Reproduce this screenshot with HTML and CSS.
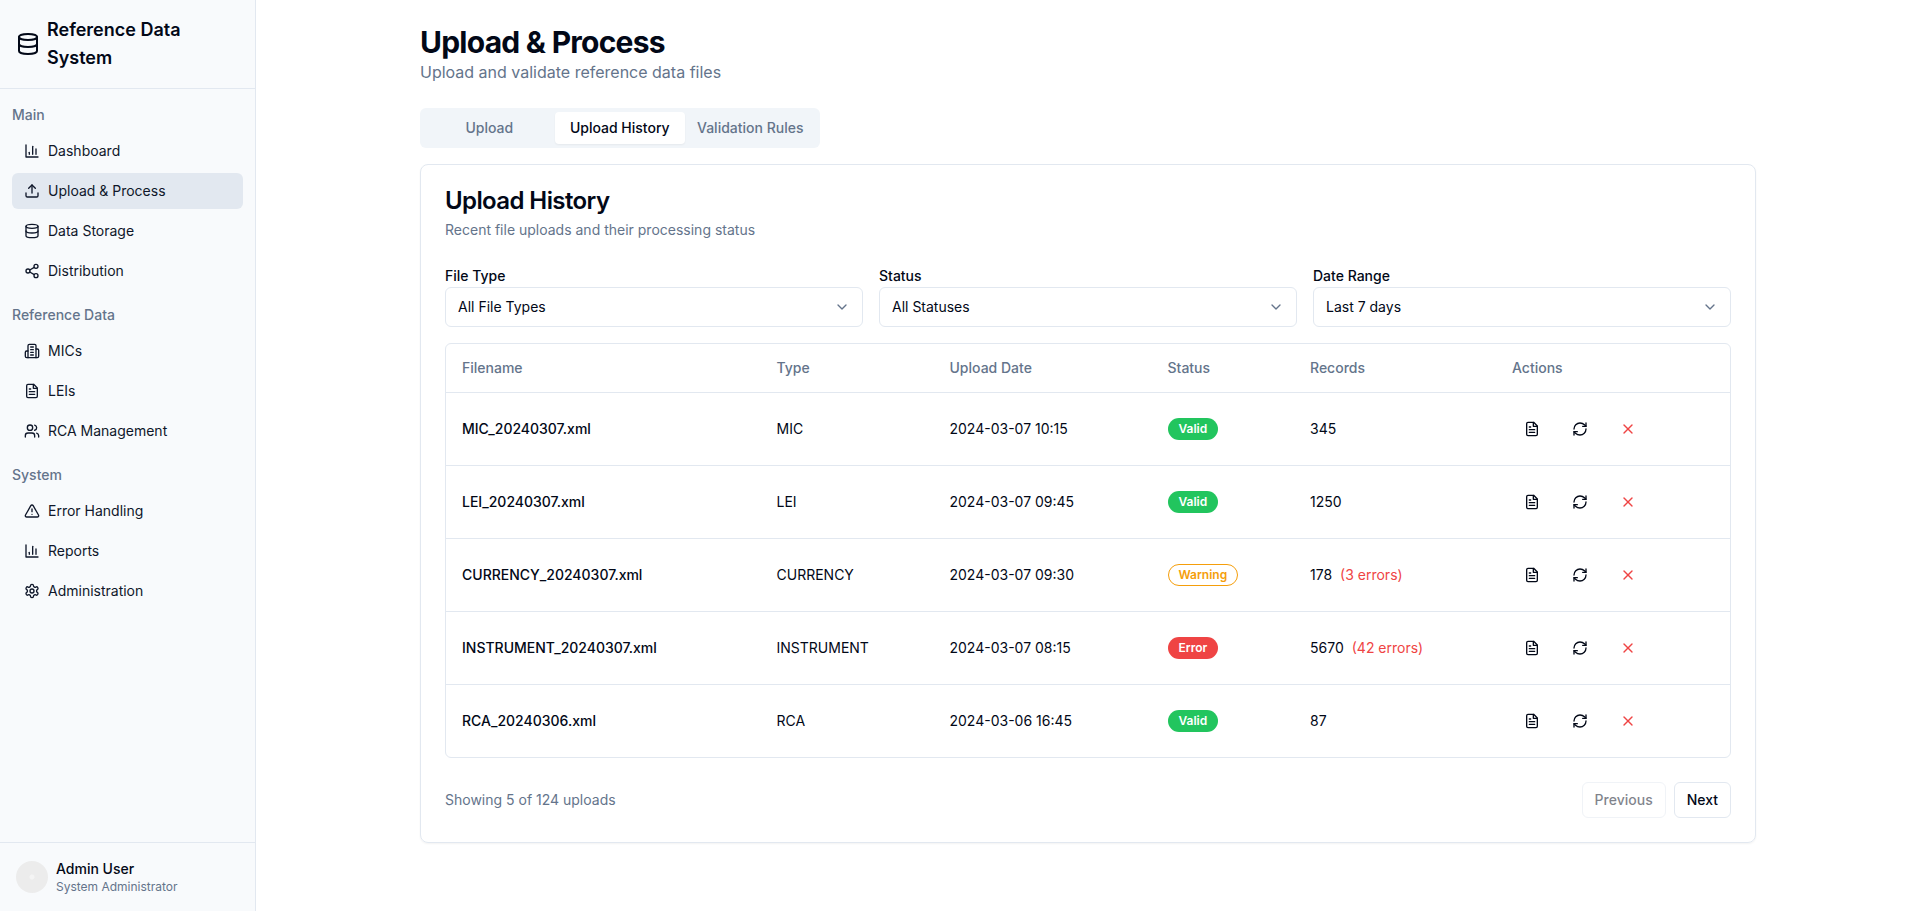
FILE: index.html
```html
<!DOCTYPE html>
<html lang="en">
<head>
  <meta charset="UTF-8" />
  <meta name="viewport" content="width=device-width, initial-scale=1.0" />
  <title>Upload &amp; Process</title>
  <link rel="stylesheet" href="styles.css">
</head>
<body>
  <svg class="icon-defs" xmlns="http://www.w3.org/2000/svg">
    <symbol id="i-chart" viewBox="0 0 24 24"><path d="M3 3v18h18"/><path d="M18 17V9"/><path d="M13 17V5"/><path d="M8 17v-3"/></symbol>
    <symbol id="i-upload" viewBox="0 0 24 24"><path d="M21 15v4a2 2 0 0 1-2 2H5a2 2 0 0 1-2-2v-4"/><polyline points="17 8 12 3 7 8"/><line x1="12" y1="3" x2="12" y2="15"/></symbol>
    <symbol id="i-database" viewBox="0 0 24 24"><ellipse cx="12" cy="5" rx="9" ry="3"/><path d="M3 5V19A9 3 0 0 0 21 19V5"/><path d="M3 12A9 3 0 0 0 21 12"/></symbol>
    <symbol id="i-share" viewBox="0 0 24 24"><circle cx="18" cy="5" r="3"/><circle cx="6" cy="12" r="3"/><circle cx="18" cy="19" r="3"/><line x1="8.59" y1="13.51" x2="15.42" y2="17.49"/><line x1="15.41" y1="6.51" x2="8.59" y2="10.49"/></symbol>
    <symbol id="i-building" viewBox="0 0 24 24"><path d="M6 22V4a2 2 0 0 1 2-2h8a2 2 0 0 1 2 2v18Z"/><path d="M6 12H4a2 2 0 0 0-2 2v6a2 2 0 0 0 2 2h2"/><path d="M18 9h2a2 2 0 0 1 2 2v9a2 2 0 0 1-2 2h-2"/><path d="M10 6h4"/><path d="M10 10h4"/><path d="M10 14h4"/><path d="M10 18h4"/></symbol>
    <symbol id="i-file" viewBox="0 0 24 24"><path d="M14.5 2H6a2 2 0 0 0-2 2v16a2 2 0 0 0 2 2h12a2 2 0 0 0 2-2V7.5L14.5 2z"/><polyline points="14 2 14 8 20 8"/><line x1="16" y1="13" x2="8" y2="13"/><line x1="16" y1="17" x2="8" y2="17"/><line x1="10" y1="9" x2="8" y2="9"/></symbol>
    <symbol id="i-users" viewBox="0 0 24 24"><path d="M16 21v-2a4 4 0 0 0-4-4H6a4 4 0 0 0-4 4v2"/><circle cx="9" cy="7" r="4"/><path d="M22 21v-2a4 4 0 0 0-3-3.87"/><path d="M16 3.13a4 4 0 0 1 0 7.75"/></symbol>
    <symbol id="i-alert" viewBox="0 0 24 24"><path d="m21.73 18-8-14a2 2 0 0 0-3.48 0l-8 14A2 2 0 0 0 4 21h16a2 2 0 0 0 1.73-3Z"/><path d="M12 9v4"/><path d="M12 17h.01"/></symbol>
    <symbol id="i-gear" viewBox="0 0 24 24"><path d="M12.22 2h-.44a2 2 0 0 0-2 2v.18a2 2 0 0 1-1 1.73l-.43.25a2 2 0 0 1-2 0l-.15-.08a2 2 0 0 0-2.73.73l-.22.38a2 2 0 0 0 .73 2.73l.15.1a2 2 0 0 1 1 1.72v.51a2 2 0 0 1-1 1.74l-.15.09a2 2 0 0 0-.73 2.73l.22.38a2 2 0 0 0 2.73.73l.15-.08a2 2 0 0 1 2 0l.43.25a2 2 0 0 1 1 1.73V20a2 2 0 0 0 2 2h.44a2 2 0 0 0 2-2v-.18a2 2 0 0 1 1-1.73l.43-.25a2 2 0 0 1 2 0l.15.08a2 2 0 0 0 2.73-.73l.22-.39a2 2 0 0 0-.73-2.73l-.15-.08a2 2 0 0 1-1-1.74v-.5a2 2 0 0 1 1-1.74l.15-.09a2 2 0 0 0 .73-2.73l-.22-.38a2 2 0 0 0-2.73-.73l-.15.08a2 2 0 0 1-2 0l-.43-.25a2 2 0 0 1-1-1.73V4a2 2 0 0 0-2-2z"/><circle cx="12" cy="12" r="3"/></symbol>
    <symbol id="i-refresh" viewBox="0 0 24 24"><path d="M3 12a9 9 0 0 1 9-9 9.75 9.75 0 0 1 6.74 2.74L21 8"/><path d="M21 3v5h-5"/><path d="M21 12a9 9 0 0 1-9 9 9.75 9.75 0 0 1-6.74-2.74L3 16"/><path d="M8 16H3v5"/></symbol>
    <symbol id="i-x" viewBox="0 0 24 24"><path d="M18 6 6 18"/><path d="m6 6 12 12"/></symbol>
    <symbol id="i-chevron" viewBox="0 0 24 24"><path d="m6 9 6 6 6-6"/></symbol>
  </svg>

  <div class="layout">
    <aside class="sidebar">
      <div class="brand">
        <svg class="brand-icon"><use href="#i-database"/></svg>
        <span>Reference Data System</span>
      </div>

      <nav class="nav">
        <div class="nav-group">
          <div class="nav-label">Main</div>
          <a class="nav-item"><svg class="icon"><use href="#i-chart"/></svg>Dashboard</a>
          <a class="nav-item active"><svg class="icon"><use href="#i-upload"/></svg>Upload &amp; Process</a>
          <a class="nav-item"><svg class="icon"><use href="#i-database"/></svg>Data Storage</a>
          <a class="nav-item"><svg class="icon"><use href="#i-share"/></svg>Distribution</a>
        </div>
        <div class="nav-group">
          <div class="nav-label">Reference Data</div>
          <a class="nav-item"><svg class="icon"><use href="#i-building"/></svg>MICs</a>
          <a class="nav-item"><svg class="icon"><use href="#i-file"/></svg>LEIs</a>
          <a class="nav-item"><svg class="icon"><use href="#i-users"/></svg>RCA Management</a>
        </div>
        <div class="nav-group">
          <div class="nav-label">System</div>
          <a class="nav-item"><svg class="icon"><use href="#i-alert"/></svg>Error Handling</a>
          <a class="nav-item"><svg class="icon"><use href="#i-chart"/></svg>Reports</a>
          <a class="nav-item"><svg class="icon"><use href="#i-gear"/></svg>Administration</a>
        </div>
      </nav>

      <div class="user">
        <div class="avatar"></div>
        <div>
          <div class="user-name">Admin User</div>
          <div class="user-role">System Administrator</div>
        </div>
      </div>
    </aside>

    <main class="main">
      <h1>Upload &amp; Process</h1>
      <p class="subtitle">Upload and validate reference data files</p>

      <div class="tabs">
        <button class="tab">Upload</button>
        <button class="tab active">Upload History</button>
        <button class="tab">Validation Rules</button>
      </div>

      <section class="card">
        <h2>Upload History</h2>
        <p class="card-desc">Recent file uploads and their processing status</p>

        <div class="filters">
          <div class="filter">
            <label>File Type</label>
            <div class="select">All File Types<svg class="icon chevron"><use href="#i-chevron"/></svg></div>
          </div>
          <div class="filter">
            <label>Status</label>
            <div class="select">All Statuses<svg class="icon chevron"><use href="#i-chevron"/></svg></div>
          </div>
          <div class="filter">
            <label>Date Range</label>
            <div class="select">Last 7 days<svg class="icon chevron"><use href="#i-chevron"/></svg></div>
          </div>
        </div>

        <div class="table-wrap">
          <table>
            <colgroup>
              <col class="col-name"><col class="col-type"><col class="col-date"><col class="col-status"><col class="col-records"><col>
            </colgroup>
            <thead>
              <tr><th>Filename</th><th>Type</th><th>Upload Date</th><th>Status</th><th>Records</th><th>Actions</th></tr>
            </thead>
            <tbody>
              <tr>
                <td class="filename">MIC_20240307.xml</td><td>MIC</td><td>2024-03-07 10:15</td>
                <td><span class="badge valid">Valid</span></td>
                <td>345</td>
                <td><div class="actions">
                  <button class="icon-btn"><svg class="icon"><use href="#i-file"/></svg></button>
                  <button class="icon-btn"><svg class="icon"><use href="#i-refresh"/></svg></button>
                  <button class="icon-btn danger"><svg class="icon"><use href="#i-x"/></svg></button>
                </div></td>
              </tr>
              <tr>
                <td class="filename">LEI_20240307.xml</td><td>LEI</td><td>2024-03-07 09:45</td>
                <td><span class="badge valid">Valid</span></td>
                <td>1250</td>
                <td><div class="actions">
                  <button class="icon-btn"><svg class="icon"><use href="#i-file"/></svg></button>
                  <button class="icon-btn"><svg class="icon"><use href="#i-refresh"/></svg></button>
                  <button class="icon-btn danger"><svg class="icon"><use href="#i-x"/></svg></button>
                </div></td>
              </tr>
              <tr>
                <td class="filename">CURRENCY_20240307.xml</td><td>CURRENCY</td><td>2024-03-07 09:30</td>
                <td><span class="badge warning">Warning</span></td>
                <td>178<span class="errors">(3 errors)</span></td>
                <td><div class="actions">
                  <button class="icon-btn"><svg class="icon"><use href="#i-file"/></svg></button>
                  <button class="icon-btn"><svg class="icon"><use href="#i-refresh"/></svg></button>
                  <button class="icon-btn danger"><svg class="icon"><use href="#i-x"/></svg></button>
                </div></td>
              </tr>
              <tr>
                <td class="filename">INSTRUMENT_20240307.xml</td><td>INSTRUMENT</td><td>2024-03-07 08:15</td>
                <td><span class="badge error">Error</span></td>
                <td>5670<span class="errors">(42 errors)</span></td>
                <td><div class="actions">
                  <button class="icon-btn"><svg class="icon"><use href="#i-file"/></svg></button>
                  <button class="icon-btn"><svg class="icon"><use href="#i-refresh"/></svg></button>
                  <button class="icon-btn danger"><svg class="icon"><use href="#i-x"/></svg></button>
                </div></td>
              </tr>
              <tr>
                <td class="filename">RCA_20240306.xml</td><td>RCA</td><td>2024-03-06 16:45</td>
                <td><span class="badge valid">Valid</span></td>
                <td>87</td>
                <td><div class="actions">
                  <button class="icon-btn"><svg class="icon"><use href="#i-file"/></svg></button>
                  <button class="icon-btn"><svg class="icon"><use href="#i-refresh"/></svg></button>
                  <button class="icon-btn danger"><svg class="icon"><use href="#i-x"/></svg></button>
                </div></td>
              </tr>
            </tbody>
          </table>
        </div>

        <div class="pager">
          <span class="pager-info">Showing 5 of 124 uploads</span>
          <div class="pager-buttons">
            <button class="page-btn disabled">Previous</button>
            <button class="page-btn">Next</button>
          </div>
        </div>
      </section>
    </main>
  </div>
</body>
</html>
```

FILE: styles.css
```css
* {
  box-sizing: border-box;
}
body {
  margin: 0;
  font-family: Inter, "Liberation Sans", sans-serif;
  font-size: 14px;
  line-height: 20px;
  color: #020817;
  background: #fff;
}
button {
  font: inherit;
  color: inherit;
  background: none;
  border: 0;
  padding: 0;
}
.icon-defs {
  display: none;
}
.icon,
.brand-icon {
  width: 16px;
  height: 16px;
  flex: none;
  fill: none;
  stroke: currentColor;
  stroke-width: 2;
  stroke-linecap: round;
  stroke-linejoin: round;
}
.brand-icon {
  width: 24px;
  height: 24px;
}

.layout {
  display: flex;
  height: 911px;
}

/* sidebar */
.sidebar {
  width: 256px;
  flex: none;
  display: flex;
  flex-direction: column;
  background: #f8fafc;
  border-right: 1px solid #e2e8f0;
}
.brand {
  display: flex;
  align-items: center;
  gap: 7px;
  height: 89px;
  padding: 16px;
  border-bottom: 1px solid #e2e8f0;
  font-size: 18px;
  line-height: 28px;
  font-weight: 600;
}
.nav {
  flex: 1;
  padding: 10px 12px 0;
}
.nav-group {
  display: flex;
  flex-direction: column;
  gap: 4px;
  margin-bottom: 10px;
}
.nav-label {
  height: 32px;
  line-height: 32px;
  margin-bottom: -2px;
  font-weight: 500;
  color: #64748b;
}
.nav-item {
  display: flex;
  align-items: center;
  gap: 8px;
  height: 36px;
  padding: 0 12px;
  border-radius: 6px;
  color: #0f172a;
}
.nav-item.active {
  background: #e2e8f0;
}
.user {
  display: flex;
  align-items: center;
  gap: 8px;
  height: 69px;
  padding: 16px;
  border-top: 1px solid #e2e8f0;
}
.avatar {
  width: 32px;
  height: 32px;
  border-radius: 50%;
  background: radial-gradient(circle, #f4f4f4 0 2px, #ececec 3px);
}
.user-name {
  font-weight: 500;
}
.user-role {
  font-size: 12px;
  line-height: 16px;
  color: #64748b;
}

/* main */
.main {
  flex: 1;
  min-width: 0;
  max-width: 1400px;
  margin: 0 auto;
  padding: 24px 32px;
}
h1 {
  margin: 0;
  font-size: 30px;
  line-height: 36px;
  font-weight: 700;
  letter-spacing: -0.75px;
}
.subtitle {
  margin: 0 0 24px;
  font-size: 16px;
  line-height: 24px;
  color: #64748b;
}
.tabs {
  display: grid;
  grid-template-columns: repeat(3, 1fr);
  width: 399.5px;
  height: 40px;
  padding: 4px;
  border-radius: 6px;
  background: #f1f5f9;
}
.tab {
  border-radius: 4px;
  font-weight: 500;
  color: #64748b;
  white-space: nowrap;
}
.tab.active {
  background: #fff;
  color: #020817;
  box-shadow: 0 1px 2px rgba(0, 0, 0, 0.05);
}

.card {
  margin-top: 16px;
  padding: 24px;
  border: 1px solid #e2e8f0;
  border-radius: 8px;
  box-shadow: 0 1px 2px rgba(0, 0, 0, 0.05);
}
h2 {
  margin: 0;
  font-size: 24px;
  line-height: 24px;
  font-weight: 600;
  letter-spacing: -0.6px;
}
.card-desc {
  margin: 7px 0 0;
  color: #64748b;
}
.filters {
  display: grid;
  grid-template-columns: repeat(3, 1fr);
  gap: 16px;
  margin-top: 26px;
}
.filter label {
  display: block;
  font-weight: 500;
  margin-bottom: 1px;
}
.select {
  display: flex;
  align-items: center;
  justify-content: space-between;
  height: 40px;
  padding: 0 12px;
  border: 1px solid #e2e8f0;
  border-radius: 6px;
}
.chevron {
  color: #64748b;
}

.table-wrap {
  margin-top: 16px;
  border: 1px solid #e2e8f0;
  border-radius: 6px;
  overflow: hidden;
}
table {
  width: 100%;
  border-collapse: collapse;
  table-layout: fixed;
}
.col-name { width: 314.5px; }
.col-type { width: 173px; }
.col-date { width: 218px; }
.col-status { width: 142.5px; }
.col-records { width: 202px; }
th {
  height: 48px;
  padding: 0 16px;
  text-align: left;
  font-weight: 500;
  color: #64748b;
}
td {
  height: 73px;
  padding: 16px;
  border-top: 1px solid #e2e8f0;
}
.filename {
  font-weight: 500;
}
.badge {
  display: inline-block;
  padding: 2px 10px;
  border: 1px solid transparent;
  border-radius: 999px;
  font-size: 12px;
  line-height: 16px;
  font-weight: 600;
  color: #fff;
  vertical-align: middle;
}
.badge.valid {
  background: #22c55e;
}
.badge.warning {
  border-color: #f59e0b;
  color: #f59e0b;
}
.badge.error {
  background: #ef4444;
}
.errors {
  margin-left: 8px;
  color: #ef4444;
}
.actions {
  display: flex;
  gap: 8px;
}
.icon-btn {
  display: flex;
  align-items: center;
  justify-content: center;
  width: 40px;
  height: 40px;
  border-radius: 6px;
}
.icon-btn.danger {
  color: #ef4444;
}

.pager {
  display: flex;
  align-items: center;
  justify-content: space-between;
  margin-top: 24px;
}
.pager-info {
  color: #64748b;
}
.pager-buttons {
  display: flex;
  gap: 8px;
}
.page-btn {
  height: 36px;
  padding: 0 12px;
  border: 1px solid #e2e8f0;
  border-radius: 6px;
  font-weight: 500;
}
.page-btn.disabled {
  opacity: 0.5;
}
```
